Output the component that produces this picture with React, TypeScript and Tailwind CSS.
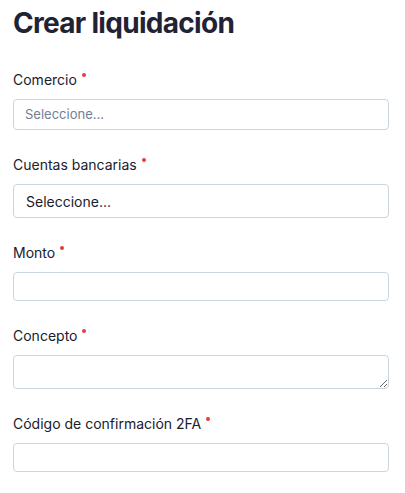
const font = { fontFamily: "Inter, 'Liberation Sans', sans-serif" };

function Label({ text }: { text: string }) {
  return (
    <label className="flex h-5 items-start text-[14px] leading-5 font-normal text-[#1a202c] mb-[9px]">
      <span>{text}</span>
      <span className="ml-[5px] mt-[3px] h-[4px] w-[4px] rounded-full bg-[#e53e3e]" />
    </label>
  );
}

export default function App() {
  return (
    <div className="min-h-screen bg-white pl-[13px] pr-[16px] pt-[6px]" style={font}>
      <h1 className="text-[28px] leading-[34px] font-bold tracking-[-0.025em] text-[#1f2335] mb-[30px]">
        Crear liquidación
      </h1>

      <div className="flex flex-col gap-[25px]">
        {/* Comercio (react-select style) */}
        <div>
          <Label text="Comercio" />
          <div className="flex h-[31px] items-center rounded border border-[#cbd5e0] px-[11px] text-[13px] text-[#718096]">
            Seleccione...
          </div>
        </div>

        {/* Cuentas bancarias */}
        <div>
          <Label text="Cuentas bancarias" />
          <select className="block h-[34px] w-full appearance-none rounded border border-[#cbd5e0] bg-white px-[12px] text-[14px] text-[#1a202c] outline-none">
            <option>Seleccione...</option>
          </select>
        </div>

        <div>
          <Label text="Monto" />
          <input className="block h-[29px] w-full rounded border border-[#cbd5e0] px-3 text-[14px] outline-none" />
        </div>

        <div>
          <Label text="Concepto" />
          <textarea className="block h-[34px] w-full rounded border border-[#cbd5e0] px-3 text-[14px] outline-none" />
        </div>

        <div>
          <Label text="Código de confirmación 2FA" />
          <input className="block h-[29px] w-full rounded border border-[#cbd5e0] px-3 text-[14px] outline-none" />
        </div>
      </div>
    </div>
  );
}
